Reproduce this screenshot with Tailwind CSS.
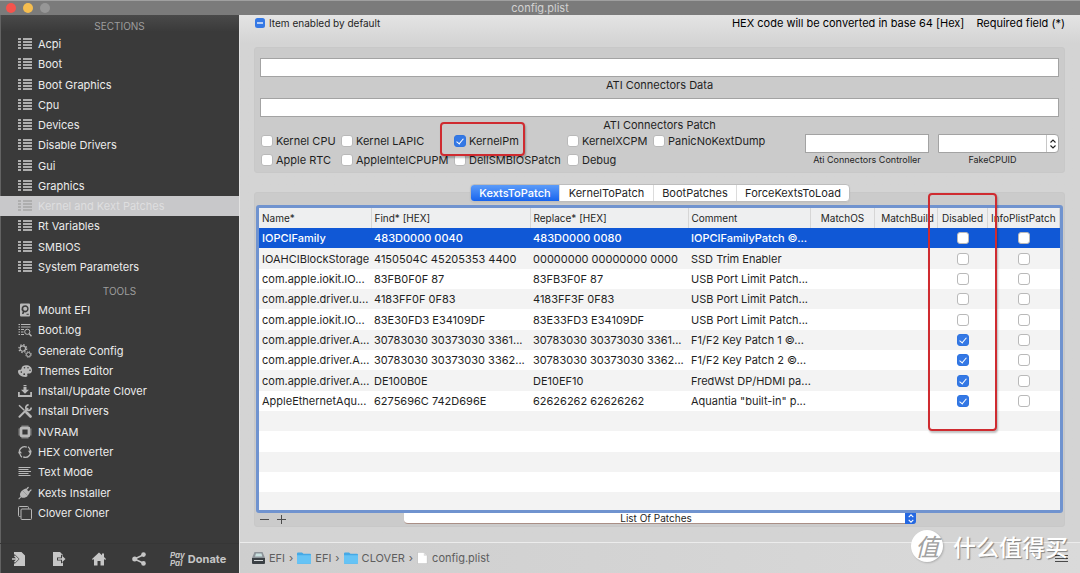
<!DOCTYPE html>
<html lang="en">
<head>
<meta charset="utf-8">
<meta name="viewport" content="width=device-width, initial-scale=1">
<title>config.plist</title>
<script src="https://cdn.jsdelivr.net/npm/@tailwindcss/browser@4"></script>
</head>
<body class="flex min-h-screen flex-col bg-[#d4d4d4] font-[Inter,'Noto_Sans_CJK_SC',sans-serif] text-[11px] leading-4 text-[#1f1f1f]">
<svg class="hidden" aria-hidden="true">
  <symbol id="list" viewBox="0 0 14 12"><path fill="currentColor" shape-rendering="crispEdges" d="M0 0h3v2H0zM5 0h9v2H5zM0 3h3v2H0zM5 3h9v2H5zM0 6h3v2H0zM5 6h9v2H5zM0 9h3v2H0zM5 9h9v2H5z"/></symbol>
  <symbol id="chevs" viewBox="0 0 8 12"><path d="M1.500 4.500 4 2l2.500 2.500M1.500 7.500 4 10l2.500-2.500" fill="none" stroke="currentColor" stroke-width="1.100"/></symbol>
  <symbol id="folder" viewBox="0 0 14 12"><path fill="#45a9e6" d="M0 1.500Q0 .5 1 .5h4l1.500 1.300H13q1 0 1 1V11q0 .8-.8.8H.8Q0 11.800 0 11z"/><path fill="#66c3f5" d="M0 3.200h14V11q0 .8-.8.8H.8Q0 11.800 0 11z"/></symbol>
</svg>

<header class="relative flex h-[15px] items-center justify-center border-t border-[#a0a0a0] bg-[#7b7b7b] text-[#d2d2d2]">
  <div class="absolute left-[6px] flex gap-[7px]">
    <button aria-label="Close" class="size-[10px] rounded-full bg-[#f4544d]"></button>
    <button aria-label="Minimize" class="size-[10px] rounded-full bg-[#f6be4f]"></button>
    <button aria-label="Zoom" class="size-[10px] rounded-full bg-[#979797]"></button>
  </div>
  <h1>config.plist</h1>
</header>

<div class="flex flex-1">
  <aside class="flex w-[240px] shrink-0 flex-col border-r border-r-[#e2e2e2] bg-[#3a3a3a] bg-linear-to-b from-[#4a4a4a] from-0% to-[#3a3a3a] to-3% text-[#ececec] shadow-[inset_1px_0_0_#626262]">
    <h2 class="flex h-[19px] items-center justify-center pt-[3px] text-[10px] text-[#9d9d9d]">SECTIONS</h2>
    <nav class="grid min-h-[243px] auto-rows-fr [&_a]:flex [&_a]:items-center [&_a]:gap-[6px] [&_a]:pl-[18px] [&_svg]:h-3 [&_svg]:w-[14px] [&_svg]:text-[#aeaeae]">
      <a href="#"><svg><use href="#list"/></svg>Acpi</a>
      <a href="#"><svg><use href="#list"/></svg>Boot</a>
      <a href="#"><svg><use href="#list"/></svg>Boot Graphics</a>
      <a href="#"><svg><use href="#list"/></svg>Cpu</a>
      <a href="#"><svg><use href="#list"/></svg>Devices</a>
      <a href="#"><svg><use href="#list"/></svg>Disable Drivers</a>
      <a href="#"><svg><use href="#list"/></svg>Gui</a>
      <a href="#"><svg><use href="#list"/></svg>Graphics</a>
      <a href="#" aria-current="page" class="bg-[#c8c8ca] text-[#dededf]"><svg><use href="#list"/></svg>Kernel and Kext Patches</a>
      <a href="#"><svg><use href="#list"/></svg>Rt Variables</a>
      <a href="#"><svg><use href="#list"/></svg>SMBIOS</a>
      <a href="#"><svg><use href="#list"/></svg>System Parameters</a>
    </nav>
    <h2 class="flex h-[23px] items-center justify-center pt-[5px] text-[10px] text-[#9d9d9d]">TOOLS</h2>
    <nav class="grid min-h-[223px] auto-rows-fr [&_a]:flex [&_a]:items-center [&_a]:gap-[6px] [&_a]:pl-[18px] [&_svg]:size-[14px] [&_svg]:text-[#b8b8b8]">
      <a href="#"><svg viewBox="0 0 14 14"><path fill="currentColor" fill-rule="evenodd" d="M3 .5h8q1 0 1 1v11q0 1-1 1H3q-1 0-1-1v-11q0-1 1-1zM7.200 2.200a3.600 3.600 0 0 0-2.500 6.300L4 11h1.500l.7-1.700A3.600 3.600 0 1 0 7.200 2.200zM8.500 10.800h2.300v1H8.500z"/><circle cx="7.200" cy="5.800" r="2" fill="currentColor"/></svg>Mount EFI</a>
      <a href="#"><svg viewBox="0 0 14 14" fill="none" stroke="currentColor"><path d="M.5 1.500H2M3 1.500h9.500M.5 4H2M3 4h9.500M.5 6.500H2M3 6.500h3M.5 9H2M3 9h2.500M.5 11.500H2M3 11.500h3"/><circle cx="9.300" cy="8.800" r="2.600"/><path stroke-width="1.300" d="m11.200 10.700 2.300 2.600"/></svg>Boot.log</a>
      <a href="#"><svg viewBox="0 0 14 14" fill="none" stroke="currentColor"><circle cx="4.800" cy="4.600" r="2.700" stroke-width="1.100"/><circle cx="4.800" cy="4.600" r="3.900" stroke-width="1.300" stroke-dasharray="1.400 1.663"/><circle cx="10.500" cy="10.500" r="2"/><circle cx="10.500" cy="10.500" r="2.900" stroke-width="1" stroke-dasharray="1.100 1.178"/></svg>Generate Config</a>
      <a href="#"><svg viewBox="0 0 14 14"><path fill="currentColor" fill-rule="evenodd" d="M8 1.200c3.500 0 6 2 6 5 0 2.800-2.200 3.500-3.600 3.400-1.200 0-1.400.7-1 1.600.3 1-.4 1.700-2 1.700C3 12.900 0 10.500 0 7.500c0-1 .5-1.800 1.500-1.800 1.200.1 1.900-.2 2-1.300C3.800 2.200 5.700 1.200 8 1.200zM6.500 2.900a.8.8 0 1 0 0 1.600.8.8 0 0 0 0-1.600zm3.500 0a.8.8 0 1 0 0 1.600.8.8 0 0 0 0-1.600zm2 2.600a.8.800 0 1 0 0 1.600.8.800 0 0 0 0-1.600zM3.300 7.300a.8.800 0 1 0 0 1.600.8.800 0 0 0 0-1.600zm2.900 2a.9.900 0 1 0 0 1.800.9.900 0 0 0 0-1.800z"/></svg>Themes Editor</a>
      <a href="#"><svg viewBox="0 0 14 14"><path fill="currentColor" d="M5.500 1h3v1h-3zM5.500 2.800h3v3h2.500L7 9.800 3 5.800h2.500zM0 8h1.800v3h10.400V8H14v5H0z"/></svg>Install/Update Clover</a>
      <a href="#"><svg viewBox="0 0 14 14" fill="none" stroke="currentColor"><path d="M1 1.200 6.300 6.300" stroke-width="1.500"/><path d="m8.500 8.500 4 4" stroke-width="2.700" stroke-linecap="round"/><path d="m1.500 12.700 8-8" stroke-width="2" stroke-linecap="round"/><path d="M10.600.9A2.700 2.700 0 1 0 13.200 3.600" stroke-width="1.700"/></svg>Install Drivers</a>
      <a href="#"><svg viewBox="0 0 14 14" fill="none" stroke="currentColor"><rect x="3" y="3" width="8" height="8" rx="1" stroke-width="2.800"/><path d="M3.500 1h7M3.500 13h7M1 3.500v7M13 3.500v7" stroke-width="1.400" opacity=".4"/></svg>NVRAM</a>
      <a href="#"><svg viewBox="0 0 14 14" fill="none" stroke="currentColor" stroke-width="1.200"><path d="M2.200 9.800A5.300 5.300 0 0 1 8.800 2.100M11.800 4.200A5.300 5.300 0 0 1 5.200 11.900M4 12.200A5 5 0 0 1 1.900 8.500M10 1.800a5 5 0 0 1 2.200 4"/><path fill="currentColor" stroke="none" d="M0 8.200h4L1.800 5.600zM10 5.800h4l-2.200 2.600z"/></svg>HEX converter</a>
      <a href="#"><svg viewBox="0 0 14 14" fill="none" stroke="currentColor"><path d="M.5 2.500h12M.5 4.500h10M.5 6.500H13M.5 8.500h10M.5 10.500h12"/></svg>Text Mode</a>
      <a href="#"><svg viewBox="0 0 14 14"><path fill="currentColor" d="M4.300 4.200 9.800 9.700C8 11.700 5 12.300 3.200 11.200L1 13.400.3 12.700 2.500 10.500C1.300 8.500 2.300 6 4.300 4.200z"/><path d="m4.300 4.200 5.500 5.500 2-3.200-4.200-4.100z" fill="currentColor"/><path d="m7.500 4.500 2.700-3M9.800 7l3.200-3" stroke="currentColor" stroke-width="1.200" stroke-linecap="round"/></svg>Kexts Installer</a>
      <a href="#"><svg viewBox="0 0 14 14" fill="none" stroke="currentColor"><path d="M2.500 10.500h-1q-1 0-1-1v-8q0-1 1-1h8q1 0 1 1v1"/><rect x="3" y="3" width="10.500" height="10.500" rx="1"/></svg>Clover Cloner</a>
    </nav>
    <footer class="mt-auto flex h-[30px] items-center border-t border-[#363636] pl-3 text-[#c6c6c6]">
      <div class="flex gap-[26px] [&_svg]:size-[14px]">
        <button aria-label="Import"><svg viewBox="0 0 14 14"><path fill="currentColor" fill-rule="evenodd" d="M2 0h7.500L13 3.500V14H2v-2.500h1L7.500 7 3 2.500H2z"/><path fill="none" stroke="currentColor" stroke-width="1.600" d="M0 7h5M2.500 3.800 5.700 7l-3.200 3.200"/></svg></button>
        <button aria-label="Export"><svg viewBox="0 0 14 14"><path fill="currentColor" d="M1 0h7l3 3v.8L9 2.500V5.500H5v3h4v3l2-1.300V14H1z"/><path fill="currentColor" d="M6 6.200h4V3.800L13.500 7 10 10.200V7.800H6z"/></svg></button>
        <button aria-label="Home"><svg viewBox="0 0 14 14"><path fill="currentColor" d="M7 .5 10 3.200V1.500h2V5l2 2-.8.9-1.200-1V13.500H8.500V9h-3v4.500H2V6.900l-1.200 1L0 7z"/></svg></button>
        <button aria-label="Share"><svg viewBox="0 0 14 14"><path stroke="currentColor" stroke-width="1.500" fill="none" d="m11.500 2.700-9 4.300 9 4.300"/><g fill="currentColor"><circle cx="2.700" cy="7" r="2.500"/><circle cx="11.500" cy="2.600" r="2.300"/><circle cx="11.500" cy="11.400" r="2.300"/></g></svg></button>
      </div>
      <button class="ml-6 flex items-center gap-[3px] font-bold"><span class="text-left text-[8px] leading-2 italic">Pay<br>Pal</span>Donate</button>
    </footer>
  </aside>

  <main class="flex min-w-0 flex-1 flex-col bg-linear-to-b from-[#e4e4e4] from-0% to-[#d4d4d4] to-5% [&_input[type=checkbox]]:relative [&_input[type=checkbox]]:size-3 [&_input[type=checkbox]]:shrink-0 [&_input[type=checkbox]]:appearance-none [&_input[type=checkbox]]:rounded-[3px] [&_input[type=checkbox]]:border [&_input[type=checkbox]]:border-[#b9b9b9] [&_input[type=checkbox]]:bg-white [&_input[type=checkbox]:checked]:border-[#2f74e0] [&_input[type=checkbox]:checked]:bg-[#3478e5] [&_input[type=checkbox]:checked]:after:absolute [&_input[type=checkbox]:checked]:after:top-px [&_input[type=checkbox]:checked]:after:left-[3px] [&_input[type=checkbox]:checked]:after:h-[7px] [&_input[type=checkbox]:checked]:after:w-1 [&_input[type=checkbox]:checked]:after:rotate-40 [&_input[type=checkbox]:checked]:after:border-r [&_input[type=checkbox]:checked]:after:border-b [&_input[type=checkbox]:checked]:after:border-white">
    <div class="flex h-8 justify-between px-[15px]">
      <p class="flex h-4 items-center gap-1 text-[10px]"><svg class="size-[10px]" viewBox="0 0 10 10"><rect width="10" height="10" rx="2.500" fill="#3478e5"/><path stroke="#fff" stroke-width="1.300" d="M2 5h6"/></svg>Item enabled by default</p>
      <p class="flex h-4 items-center gap-3 text-black"><span>HEX code will be converted in base 64 [Hex]</span><span>Required field (*)</span></p>
    </div>

    <section class="mr-[15px] ml-[14px] rounded-[3px] border border-[#c8c8c8] bg-[#cbcbcb] px-[5px] pt-[10px] pb-[3px]">
      <input id="atidata" type="text" class="block h-[19px] w-full border border-[#a3a3a3] bg-white px-1">
      <label for="atidata" class="mb-1 block text-center leading-[17px]">ATI Connectors Data</label>
      <input id="atipatch" type="text" class="block h-[19px] w-full border border-[#a3a3a3] bg-white px-1">
      <label for="atipatch" class="block h-[14px] text-center">ATI Connectors Patch</label>
      <div class="flex justify-between">
        <div class="grid grid-cols-[80px_113px_113px_86px_auto] auto-rows-[19px] pl-px [&_label]:flex [&_label]:items-center [&_label]:gap-[3px] [&_label]:whitespace-nowrap">
          <label><input type="checkbox">Kernel CPU</label>
          <label><input type="checkbox">Kernel LAPIC</label>
          <label class="relative"><input type="checkbox" checked>KernelPm<span class="pointer-events-none absolute -top-[9px] -left-[14px] z-10 h-[34px] w-[85px] rounded-[4px] border-2 border-[#cf2b30] shadow-[1px_2px_2px_#00000040]"></span></label>
          <label><input type="checkbox">KernelXCPM</label>
          <label><input type="checkbox">PanicNoKextDump</label>
          <label><input type="checkbox">Apple RTC</label>
          <label><input type="checkbox">AppleIntelCPUPM</label>
          <label><input type="checkbox">DellSMBIOSPatch</label>
          <label><input type="checkbox">Debug</label>
        </div>
        <div class="flex gap-[9px] pt-[3px] text-center text-[9px] leading-[14px]">
          <div class="w-[124px]">
            <input id="atictl" type="text" class="block h-[19px] w-full border border-[#a3a3a3] bg-white px-1">
            <label for="atictl" class="block">Ati Connectors Controller</label>
          </div>
          <div class="w-[121px]">
            <div class="relative">
              <select id="fakecpu" class="block h-[19px] w-full appearance-none rounded-r-[4px] border border-[#a3a3a3] bg-white"><option></option></select>
              <span class="pointer-events-none absolute inset-y-px right-px flex w-3 items-center justify-center border-l border-[#c8c8c8]"><svg class="h-3 w-2"><use href="#chevs"/></svg></span>
            </div>
            <label for="fakecpu" class="block pr-3">FakeCPUID</label>
          </div>
        </div>
      </div>
    </section>

    <div class="relative z-10 mt-[11px] flex justify-center">
      <div role="tablist" class="flex h-[18px] divide-x divide-[#dcdcdc] overflow-hidden rounded-[4px] border border-[#bdbdbd] bg-white shadow-xs">
        <button role="tab" aria-selected="true" class="w-[89px] bg-linear-to-b from-[#5b9bf8] to-[#1563ee] font-medium text-white">KextsToPatch</button>
        <button role="tab" class="w-[94px]">KernelToPatch</button>
        <button role="tab" class="w-[83px]">BootPatches</button>
        <button role="tab" class="w-[112px]">ForceKextsToLoad</button>
      </div>
    </div>

    <section class="-mt-[10px] mr-[15px] ml-[14px] rounded-[3px] border border-[#c8c8c8] bg-[#cbcbcb] px-px pt-3">
      <div class="relative">
        <div class="h-[308px] overflow-hidden rounded-[3px] border-3 border-[#7093cf] bg-white">
          <table class="h-[305px] w-full table-fixed border-collapse [&_td]:overflow-hidden [&_td]:p-0 [&_td]:pl-[3px] [&_td]:text-ellipsis [&_td]:whitespace-nowrap [&_td:nth-child(n+7)]:pl-0 [&_td:nth-child(n+7)]:text-center [&_td_input]:mx-auto [&_td_input]:block [&_th]:border-r [&_th]:border-[#d6d6d6] [&_th]:px-[3px] [&_th]:font-normal [&_th]:whitespace-nowrap">
            <colgroup><col class="w-[112px]"><col class="w-[159px]"><col class="w-[158px]"><col><col class="w-[64px]"><col class="w-[63px]"><col class="w-[50px]"><col class="w-[72px]"></colgroup>
            <thead class="bg-[#eeeff0] text-left text-[10px]">
              <tr class="h-5"><th>Name*</th><th>Find* [HEX]</th><th>Replace* [HEX]</th><th>Comment</th><th class="text-center">MatchOS</th><th class="text-right">MatchBuild</th><th class="text-center">Disabled</th><th>InfoPlistPatch</th></tr>
            </thead>
            <tbody class="[&_tr]:h-5 [&_tr:nth-child(even)]:bg-[#f3f3f3]">
              <tr class="bg-[#1058d6] font-medium text-white"><td>IOPCIFamily</td><td>483D0000 0040</td><td>483D0000 0080</td><td>IOPCIFamilyPatch ©...</td><td></td><td></td><td><input type="checkbox" aria-label="Disabled"></td><td><input type="checkbox" aria-label="InfoPlistPatch"></td></tr>
              <tr><td>IOAHCIBlockStorage</td><td>4150504C 45205353 4400</td><td>00000000 00000000 0000</td><td>SSD Trim Enabler</td><td></td><td></td><td><input type="checkbox" aria-label="Disabled"></td><td><input type="checkbox" aria-label="InfoPlistPatch"></td></tr>
              <tr><td>com.apple.iokit.IO...</td><td>83FB0F0F 87</td><td>83FB3F0F 87</td><td>USB Port Limit Patch...</td><td></td><td></td><td><input type="checkbox" aria-label="Disabled"></td><td><input type="checkbox" aria-label="InfoPlistPatch"></td></tr>
              <tr><td>com.apple.driver.u...</td><td>4183FF0F 0F83</td><td>4183FF3F 0F83</td><td>USB Port Limit Patch...</td><td></td><td></td><td><input type="checkbox" aria-label="Disabled"></td><td><input type="checkbox" aria-label="InfoPlistPatch"></td></tr>
              <tr><td>com.apple.iokit.IO...</td><td>83E30FD3 E34109DF</td><td>83E33FD3 E34109DF</td><td>USB Port Limit Patch...</td><td></td><td></td><td><input type="checkbox" aria-label="Disabled"></td><td><input type="checkbox" aria-label="InfoPlistPatch"></td></tr>
              <tr><td>com.apple.driver.A...</td><td>30783030 30373030 3361...</td><td>30783030 30373030 3361...</td><td>F1/F2 Key Patch 1 ©...</td><td></td><td></td><td><input type="checkbox" checked aria-label="Disabled"></td><td><input type="checkbox" aria-label="InfoPlistPatch"></td></tr>
              <tr><td>com.apple.driver.A...</td><td>30783030 30373030 3362...</td><td>30783030 30373030 3362...</td><td>F1/F2 Key Patch 2 ©...</td><td></td><td></td><td><input type="checkbox" checked aria-label="Disabled"></td><td><input type="checkbox" aria-label="InfoPlistPatch"></td></tr>
              <tr><td>com.apple.driver.A...</td><td>DE100B0E</td><td>DE10EF10</td><td class="overflow-visible!">FredWst DP/HDMI pa...</td><td></td><td></td><td><input type="checkbox" checked aria-label="Disabled"></td><td><input type="checkbox" aria-label="InfoPlistPatch"></td></tr>
              <tr><td>AppleEthernetAqu...</td><td>6275696C 742D696E</td><td>62626262 62626262</td><td>Aquantia "built-in" p...</td><td></td><td></td><td><input type="checkbox" checked aria-label="Disabled"></td><td><input type="checkbox" aria-label="InfoPlistPatch"></td></tr>
              <tr><td colspan="8"></td></tr>
              <tr><td colspan="8"></td></tr>
              <tr><td colspan="8"></td></tr>
              <tr><td colspan="8"></td></tr>
              <tr><td colspan="8"></td></tr>
            </tbody>
          </table>
        </div>
        <span class="pointer-events-none absolute -top-3 right-[66px] z-20 h-[238px] w-[69px] rounded-[4px] border-2 border-[#cf2b30] shadow-[1px_2px_2px_#00000040]"></span>
      </div>
      <div class="flex h-[13px] items-start">
        <div class="flex w-[148px] gap-[6px] pt-px pl-[3px] text-[#4c4c4c]">
          <button aria-label="Remove"><svg class="size-[11px]" viewBox="0 0 11 11"><path stroke="currentColor" d="M1 5.500h9"/></svg></button>
          <button aria-label="Add"><svg class="size-[11px]" viewBox="0 0 11 11"><path stroke="currentColor" d="M1 5.500h9M5.500 1v9"/></svg></button>
        </div>
        <div class="relative mr-[147px] flex-1">
          <select aria-label="List Of Patches" class="block h-[11px] w-full appearance-none rounded-b-[4px] border-b border-[#a98f86] bg-white pr-2 text-center text-[10px] leading-[10px]"><option>List Of Patches</option></select>
          <span class="pointer-events-none absolute top-0 right-0 flex h-[11px] w-[11px] items-center justify-center rounded-br-[3px] bg-[#2468e2] text-white"><svg class="h-[11px] w-2"><use href="#chevs"/></svg></span>
        </div>
      </div>
    </section>

    <footer class="mt-auto flex h-[31px] items-center border-t border-[#ececec] bg-linear-to-r from-[#cecece] to-[#dadada] px-3 text-[#5e5e5e]">
      <nav aria-label="Path" class="flex flex-1 items-center gap-1">
        <svg class="h-3 w-[13px]" viewBox="0 0 13 12"><path fill="#8d9399" d="M2.500 0h8L13 6H0z"/><path fill="#c9e0df" d="M4 1.500h5.500l.8 3H3z"/><path fill="#3b4044" d="M0 6h13v5q0 1-1 1H1q-1 0-1-1z"/><path stroke="#d6dadc" d="M2 8.500h9"/></svg>
        <a href="#">EFI</a><span>›</span>
        <svg class="h-3 w-[14px]"><use href="#folder"/></svg><a href="#">EFI</a><span>›</span>
        <svg class="h-3 w-[14px]"><use href="#folder"/></svg><a href="#">CLOVER</a><span>›</span>
        <svg class="h-3 w-[11px]" viewBox="0 0 11 12"><path fill="#fff" stroke="#b5b5b5" stroke-width=".6" d="M.5.3h6.300l3.500 3.500v7.900H.5z"/><path fill="#ddd" d="M6.800.3v3.500h3.500z"/></svg><a href="#">config.plist</a>
      </nav>
      <button aria-label="Menu" class="text-[#4a4a4a]"><svg class="h-[11px] w-[13px]" viewBox="0 0 13 11"><path stroke="currentColor" d="M0 2.500h13M0 5.500h13M0 8.500h13"/></svg></button>
    </footer>
  </main>
</div>

<div class="pointer-events-none absolute right-3 bottom-[11px] z-30 flex items-center gap-[10px] text-white">
  <span class="flex size-8 items-center justify-center rounded-full bg-white font-['Noto_Sans_CJK_SC',sans-serif] text-2xl text-[#a2a2a2] italic shadow-[1px_1px_2px_#00000030]">值</span>
  <span class="font-['Noto_Sans_CJK_SC',sans-serif] text-[23px] leading-8 font-medium text-shadow-[1px_1px_1px_#00000066]">什么值得买</span>
</div>
</body>
</html>
